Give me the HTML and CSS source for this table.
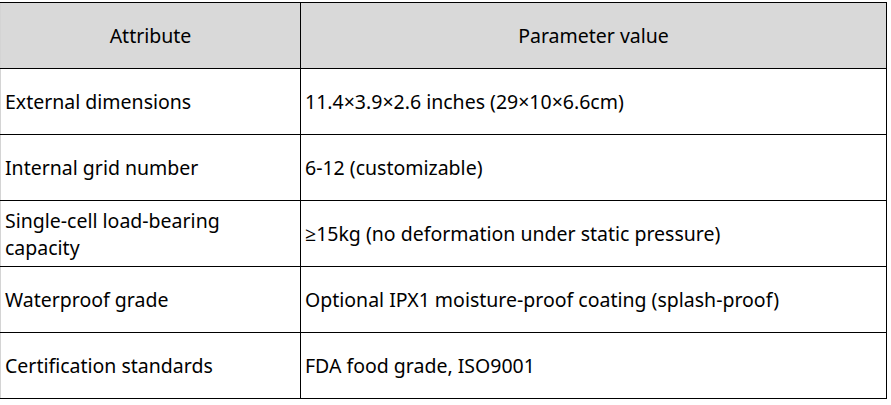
FILE: index.html
```html
<!DOCTYPE html>
<html>
<head>
<meta charset="utf-8">
<link rel="stylesheet" href="styles.css">
</head>
<body>
<table class="spec">
<colgroup><col class="c1"><col class="c2"></colgroup>
<thead>
<tr><th>Attribute</th><th>Parameter value</th></tr>
</thead>
<tbody>
<tr><td>External dimensions</td><td>11.4×3.9×2.6 inches (29×10×6.6cm)</td></tr>
<tr><td>Internal grid number</td><td>6-12 (customizable)</td></tr>
<tr><td>Single-cell load-bearing capacity</td><td>≥15kg (no deformation under static pressure)</td></tr>
<tr><td>Waterproof grade</td><td>Optional IPX1 moisture-proof coating (splash-proof)</td></tr>
<tr><td>Certification standards</td><td>FDA food grade, ISO9001</td></tr>
</tbody>
</table>
</body>
</html>
```
FILE: styles.css
```css
html, body { margin: 0; padding: 0; background: #fff; }
body { padding-top: 2px; font-family: "Noto Sans", "Open Sans", sans-serif; font-size: 19.5px; color: #000; }
.spec { border-collapse: collapse; table-layout: fixed; width: 887px; }
.c1 { width: 300px; }
.spec th, .spec td { border: 1px solid #000; height: 65px; padding: 0 4px; vertical-align: middle; line-height: 27px; }
.spec th { background: #d9d9d9; font-weight: normal; text-align: center; }
.spec td { text-align: left; }
.spec tr > :first-child { border-left-color: #d4d4d4; }
.spec td:first-child { padding-right: 20px; }
```
